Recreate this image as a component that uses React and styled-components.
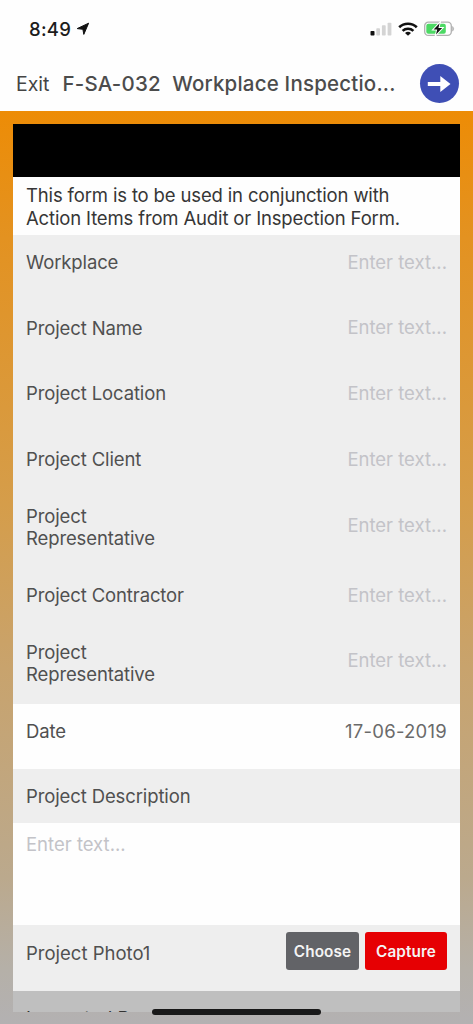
import React from 'react'
import styled, { createGlobalStyle } from 'styled-components'

const fields = [
  { label: 'Workplace' },
  { label: 'Project Name' },
  { label: 'Project Location' },
  { label: 'Project Client' },
  { label: 'Project Representative', tall: true },
  { label: 'Project Contractor' },
  { label: 'Project Representative', tall: true },
]

const StatusBar = () => (
  <Status>
    <Clock>
      <span>8:49</span>
      <svg width="14" height="14" viewBox="0 0 14 14">
        <path d="M12.6 1.2 L7.8 12.4 L6.9 7.3 L1.2 6.6 Z" fill="#111" stroke="#111" strokeWidth="1" strokeLinejoin="round" />
      </svg>
    </Clock>
    <Indicators>
      <svg width="22" height="14" viewBox="0 0 22 14">
        <rect x="0.5" y="9" width="4" height="4.6" rx="0.8" fill="#111" />
        <rect x="6.3" y="6.3" width="3.7" height="7.3" rx="0.8" fill="#d4d4d4" />
        <rect x="11.9" y="3.3" width="3.8" height="10.3" rx="0.8" fill="#d4d4d4" />
        <rect x="17.6" y="0.8" width="3.8" height="12.8" rx="0.8" fill="#d4d4d4" />
      </svg>
      <svg width="20" height="14" viewBox="0 0 20 14">
        <g fill="none" stroke="#111" strokeWidth="2.6">
          <path d="M1.2 5.3 C6 0.6 14 0.6 18.8 5.3" />
          <path d="M4.6 8.9 C7.6 6.1 12.4 6.1 15.4 8.9" />
        </g>
        <path d="M7 10.9 Q10 8.7 13 10.9 L10 13.8 Z" fill="#111" />
      </svg>
      <svg width="31" height="16" viewBox="0 0 31 16">
        <rect x="0.7" y="1.2" width="26.6" height="13.2" rx="3.6" fill="#fff" stroke="#b0b0b0" strokeWidth="1.3" />
        <rect x="2.3" y="2.8" width="19.5" height="10" rx="2" fill="#4cd964" />
        <path d="M28.6 5.4 Q30.8 7.8 28.6 10.2 Z" fill="#a8a8a8" stroke="#a8a8a8" strokeWidth="0.5" />
        <path d="M15.6 2.2 L9.6 8.6 H13.2 L12 13.6 L18.2 7 H14.4 Z" fill="#111" stroke="#fff" strokeWidth="2" paintOrder="stroke" />
      </svg>
    </Indicators>
  </Status>
)

const App = () => {
  return (
    <Screen>
      <GlobalStyle />
      <StatusBar />
      <NavBar>
        <Exit>Exit</Exit>
        <Title>{'F-SA-032  Workplace Inspectio...'}</Title>
        <NextButton aria-label="Next">
          <svg width="24" height="18" viewBox="0 0 24 18">
            <path d="M0.8 6.9 H13.3 V1 L23.5 9 L13.3 17 V11.1 H0.8 Z" fill="#fff" />
          </svg>
        </NextButton>
      </NavBar>
      <Backdrop>
        <Form>
          <Banner />
          <Intro>
            <div>This form is to be used in conjunction with</div>
            <div>Action Items from Audit or Inspection Form.</div>
          </Intro>
          {fields.map(({ label, tall }, i) => (
            <Row key={i} $height={tall ? 70.25 : 65.7}>
              <Label $tall={tall}>{label}</Label>
              <Placeholder>Enter text...</Placeholder>
            </Row>
          ))}
          <Row $height={65.5} $white>
            <Label>Date</Label>
            <DateValue>17-06-2019</DateValue>
          </Row>
          <Row $height={53.2}>
            <Label>Project Description</Label>
          </Row>
          <Notes>
            <Placeholder>Enter text...</Placeholder>
          </Notes>
          <PhotoRow $height={66}>
            <Label>Project Photo1</Label>
            <Buttons>
              <Button $width={73}>Choose</Button>
              <Button $width={82} $color="#e60003">Capture</Button>
            </Buttons>
          </PhotoRow>
          <NextRow>
            <Label>Inspected By</Label>
          </NextRow>
        </Form>
        <HomeIndicator />
      </Backdrop>
    </Screen>
  )
}

export default App


const GlobalStyle = createGlobalStyle`
  body {
    margin: 0;
    background: #fff;
  }
  * {
    box-sizing: border-box;
  }
`

const Screen = styled.div`
  display: flex;
  flex-direction: column;
  width: 473px;
  height: 1024px;
  overflow: hidden;
  background: #fefefe;
  font-family: Inter, "Liberation Sans", sans-serif;
  font-size: 18.5px;
  line-height: 22.7px;
  color: #505050;
`

const Status = styled.header`
  display: flex;
  justify-content: space-between;
  align-items: center;
  height: 58px;
  padding: 0 18px 0 29px;
  color: #1c1c1c;
`

const Clock = styled.div`
  display: flex;
  align-items: center;
  gap: 5px;
  font-size: 18.5px;
  font-weight: 500;
  letter-spacing: 0.3px;
`

const Indicators = styled.div`
  display: flex;
  align-items: center;
  gap: 6px;
`

const NavBar = styled.nav`
  display: flex;
  align-items: center;
  height: 53px;
  padding: 0 14.5px 0 16px;
`

const Exit = styled.span`
  width: 46.5px;
  font-size: 19.5px;
  color: #444;
`

const Title = styled.h1`
  flex: 1;
  margin: 0;
  font-size: 20.5px;
  font-weight: 500;
  letter-spacing: 0.2px;
  white-space: pre;
  color: #4c4c4c;
`

const NextButton = styled.button`
  display: flex;
  align-items: center;
  justify-content: center;
  width: 39px;
  height: 39px;
  margin-bottom: 2px;
  padding: 0;
  border: none;
  border-radius: 50%;
  background: #3f4fb5;
`

const Backdrop = styled.main`
  position: relative;
  flex: 1;
  padding: 13px 13px 12px;
  background: linear-gradient(#ed8c06 0%, #e39221 14%, #d59d4a 43%, #c8a36d 61%, #bba98d 84%, #b5b0a8 94%, #b3b1b2 100%);
`

const Form = styled.section`
  height: 888px;
  overflow: hidden;
  background: #fefefe;
`

const Banner = styled.div`
  height: 53px;
  background: #000;
`

const Intro = styled.div`
  height: 58px;
  padding: 7px 13px 0;
  letter-spacing: -0.15px;
  white-space: nowrap;
  color: #363636;
`

const Row = styled.div`
  display: flex;
  justify-content: space-between;
  height: ${({ $height }) => $height}px;
  padding: 0 13px;
  background: ${({ $white }) => ($white ? '#fefefe' : '#eeeeee')};
`

const Label = styled.div`
  width: ${({ $tall }) => ($tall ? '150px' : 'auto')};
  padding-top: ${({ $tall }) => ($tall ? 7 : 16)}px;
  letter-spacing: -0.12px;
`

const Placeholder = styled.div`
  padding-top: 15.8px;
  color: #c3c3c8;
`

const DateValue = styled.div`
  padding-top: 16px;
  letter-spacing: 0.25px;
  color: #6a6a6a;
`

const Notes = styled.div`
  height: 102.8px;
  padding: 0 13px;

  ${Placeholder} {
    padding-top: 10.5px;
  }
`

const PhotoRow = styled(Row)`
  ${Label} {
    padding-top: 16.6px;
    letter-spacing: 0;
  }
`

const Buttons = styled.div`
  display: flex;
  gap: 6px;
  padding-top: 7px;
`

const Button = styled.button`
  width: ${({ $width }) => $width}px;
  height: 38px;
  padding: 0;
  border: none;
  border-radius: 3px;
  background: ${({ $color }) => $color || '#626367'};
  color: #f4f4f4;
  font-family: inherit;
  font-size: 15.3px;
  font-weight: 600;
  letter-spacing: 0.1px;
`

const NextRow = styled(Row).attrs({ $height: 66 })`
  background: #bfbfbf;

  ${Label} {
    padding-top: 15.3px;
    letter-spacing: 0;
    color: #333;
  }
`

const HomeIndicator = styled.div`
  position: absolute;
  left: 152px;
  bottom: 9px;
  width: 169px;
  height: 6px;
  border-radius: 3px;
  background: #191919;
`
